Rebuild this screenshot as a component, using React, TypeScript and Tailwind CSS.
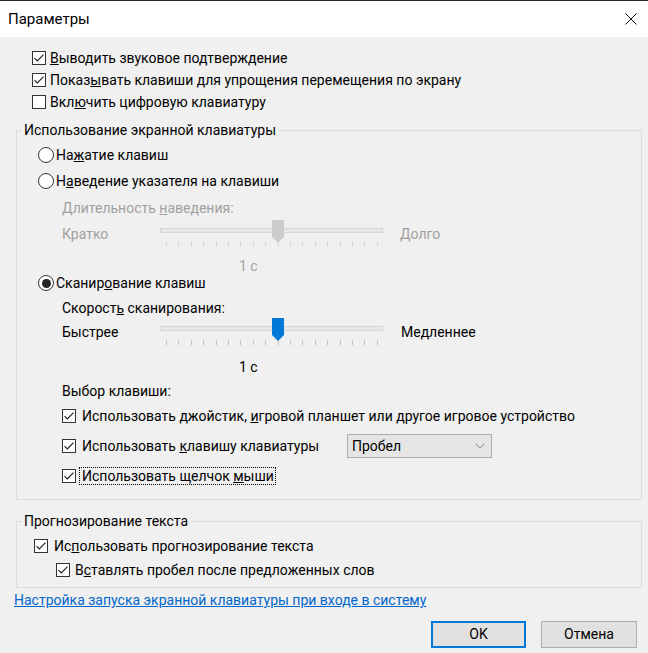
import type { ReactNode } from 'react';

function Check({ checked }: { checked: boolean }) {
  return (
    <span className="inline-flex h-[14px] w-[14px] shrink-0 items-center justify-center border border-[#333333] bg-white">
      {checked && (
        <svg width="12" height="12" viewBox="0 0 12 12" aria-hidden>
          <path d="M1.5 6.2 L4.3 9 L10.5 2.6" fill="none" stroke="#1a1a1a" strokeWidth="1.1" />
        </svg>
      )}
    </span>
  );
}

function CheckRow({ checked, children, className = '' }: { checked: boolean; children: ReactNode; className?: string }) {
  return (
    <div className={`flex items-center gap-[4px] ${className}`}>
      <Check checked={checked} />
      <span className="leading-[18px]">{children}</span>
    </div>
  );
}

function Radio({ checked, children, className = '' }: { checked: boolean; children: ReactNode; className?: string }) {
  return (
    <div className={`flex items-center gap-[2px] ${className}`}>
      <span className="inline-flex h-[16px] w-[16px] shrink-0 items-center justify-center rounded-full border border-[#333333] bg-white">
        {checked && <span className="h-[9px] w-[9px] rounded-full bg-[#222222]" />}
      </span>
      <span className="leading-[18px]">{children}</span>
    </div>
  );
}

function Slider({ disabled }: { disabled?: boolean }) {
  const ticks = Array.from({ length: 18 }, (_, i) => 6 + i * 12.4);
  const tickColor = disabled ? '#d8d8d8' : '#c2c2c2';
  const thumb = disabled ? '#cccccc' : '#0078d7';
  return (
    <svg width="224" height="28" viewBox="0 0 224 28" className="shrink-0" aria-hidden>
      <rect x="0.5" y="8.5" width="222" height="4" fill="#e7e7e7" stroke="#d6d6d6" />
      {ticks.map((x) => (
        <rect key={x} x={Math.round(x)} y="22" width="1" height="5" fill={tickColor} />
      ))}
      <polygon points="112,0 124,0 124,17 118,23 112,17" fill={thumb} />
    </svg>
  );
}

export default function App() {
  return (
    <div className="flex h-[653px] w-[648px] flex-col overflow-hidden border-t border-[#2b2b2b] bg-[#f0f0f0] font-['Roboto','Liberation_Sans',sans-serif] text-[14px] text-black">
      <div className="flex h-[36px] shrink-0 items-center justify-between bg-white pl-[8px] pr-[11px]">
        <span className="text-[15px] leading-[20px]">Параметры</span>
        <svg width="12" height="12" viewBox="0 0 12 12" aria-hidden>
          <path d="M0.5 0.5 L11.5 11.5 M11.5 0.5 L0.5 11.5" stroke="#111111" strokeWidth="1" />
        </svg>
      </div>

      <div className="flex flex-col pl-[16px] pr-[6px] pt-[10px]">
        <div className="flex flex-col pl-[16px]">
          <CheckRow checked className="h-[22px]">
            <u>В</u>ыводить звуковое подтверждение
          </CheckRow>
          <CheckRow checked className="h-[22px]">
            Показ<u>ы</u>вать клавиши для упрощения перемещения по экрану
          </CheckRow>
          <CheckRow checked={false} className="h-[22px]">
            Вкл<u>ю</u>чить цифровую клавиатуру
          </CheckRow>
        </div>

        <fieldset className="mt-[7px] border border-[#dcdcdc] pb-[8px]">
          <legend className="ml-[4px] px-[3px] leading-[20px]">Использование экранной клавиатуры</legend>
          <div className="mt-[2px] flex flex-col pl-[21px]">
            <Radio checked={false} className="h-[26px]">
              На<u>ж</u>атие клавиш
            </Radio>
            <Radio checked={false} className="h-[26px]">
              Н<u>а</u>ведение указателя на клавиши
            </Radio>

            <div className="flex flex-col pl-[24px] text-[#a0a0a0]">
              <div className="mt-[2px] flex h-[24px] items-center">
                Длительность&nbsp;<u>н</u>аведения:
              </div>
              <div className="flex h-[28px] items-start">
                <span className="mt-[4px] w-[98px] leading-[20px]">Кратко</span>
                <Slider disabled />
                <span className="ml-[16px] mt-[4px] leading-[20px]">Долго</span>
              </div>
              <div className="mt-[10px] h-[16px] pl-[177px] leading-[16px]">1 с</div>
            </div>

            <Radio checked className="h-[18px]">
              Сканир<u>о</u>вание клавиш
            </Radio>

            <div className="flex flex-col pl-[24px]">
              <div className="mt-[6px] flex h-[20px] items-center">
                Скорост<u>ь</u>&nbsp;сканирования:
              </div>
              <div className="flex h-[28px] items-start">
                <span className="mt-[4px] w-[98px] leading-[20px]">Быстрее</span>
                <Slider />
                <span className="ml-[17px] mt-[4px] leading-[20px]">Медленнее</span>
              </div>
              <div className="mt-[13px] h-[16px] pl-[177px] leading-[16px]">1 с</div>
              <div className="mt-[6px] flex h-[20px] items-center">Выбор клавиши:</div>
              <CheckRow checked className="h-[30px] gap-[6px]">
                Использовать джойстик, <u>и</u>гровой планшет или другое игровое устройство
              </CheckRow>
              <div className="flex h-[30px] items-center">
                <CheckRow checked className="w-[285px] gap-[6px]">
                  Использовать <u>к</u>лавишу клавиатуры
                </CheckRow>
                <div className="flex h-[24px] w-[145px] items-center justify-between border border-[#adadad] bg-[#e5e5e5] pl-[4px] pr-[6px]">
                  <span className="leading-[18px]">Пробел</span>
                  <svg width="10" height="6" viewBox="0 0 10 6" aria-hidden>
                    <path d="M0.5 0.5 L5 5 L9.5 0.5" fill="none" stroke="#8a8a8a" strokeWidth="1" />
                  </svg>
                </div>
              </div>
              <div className="flex h-[30px] items-center gap-[3px]">
                <Check checked />
                <span className="border border-dotted border-black pl-[2px] pr-[1px] leading-[16px]">
                  Использовать щелчок <u>м</u>ыши
                </span>
              </div>
            </div>
          </div>
        </fieldset>

        <fieldset className="mt-[11px] border border-[#dcdcdc] pb-[5px]">
          <legend className="ml-[4px] px-[3px] leading-[20px]">Прогнозирование текста</legend>
          <div className="mt-[3px] flex flex-col pl-[17px]">
            <CheckRow checked className="h-[24px] gap-[6px]">
              Ис<u>п</u>ользовать прогнозирование текста
            </CheckRow>
            <CheckRow checked className="h-[24px] pl-[22px] gap-[5px]">
              В<u>с</u>тавлять пробел после предложенных слов
            </CheckRow>
          </div>
        </fieldset>

        <a className="-ml-[2px] mt-[2px] h-[20px] leading-[20px] text-[#0066cc] underline">
          Настройка запуска экранной клавиатуры при входе в систему
        </a>

        <div className="mr-[5px] mt-[11px] flex justify-end gap-[15px]">
          <button className="flex h-[27px] w-[95px] items-center justify-center border-2 border-[#0078d7] bg-[#e1e1e1]">
            OK
          </button>
          <button className="flex h-[27px] w-[96px] items-center justify-center border border-[#adadad] bg-[#e1e1e1]">
            Отмена
          </button>
        </div>
      </div>
    </div>
  );
}
